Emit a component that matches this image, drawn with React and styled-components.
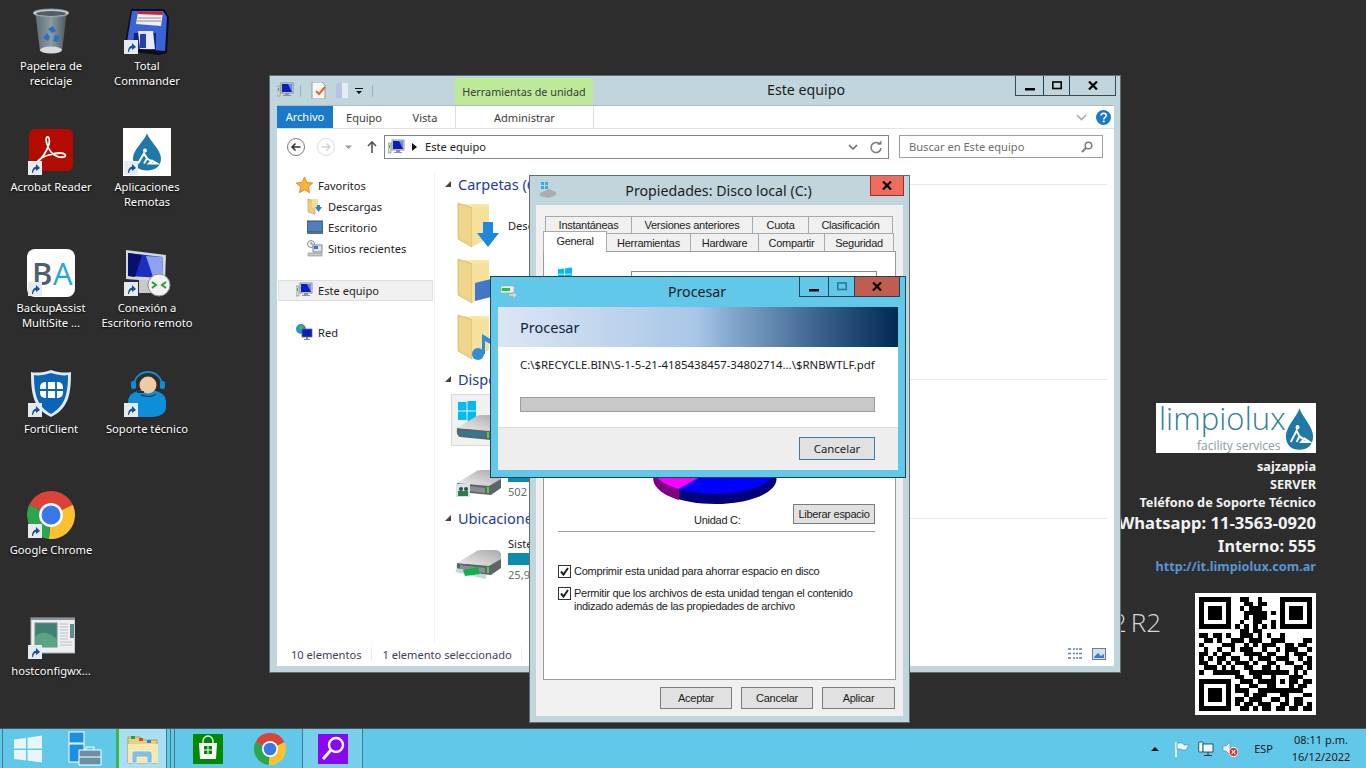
import React from "react";
import styled, { createGlobalStyle } from "styled-components";

const UI = `"Noto Sans", "Open Sans", sans-serif`;
const CLASSIC = `"Liberation Sans", Arial, sans-serif`;

const Global = createGlobalStyle`
  html, body { margin: 0; padding: 0; background: #2d2d2d; overflow: hidden; }
  * { box-sizing: border-box; }
`;

const Screen = styled.div`
  width: 1366px; height: 768px; display: flex; flex-direction: column; overflow: hidden;
  background: #2d2d2d; font-family: ${UI}; font-size: 11.1px; color: #1a1a1a;
`;
const Desktop = styled.div`
  position: relative; flex: 1; display: flex; justify-content: space-between; min-height: 0;
`;
const IconGrid = styled.div`
  display: grid; grid-template-columns: repeat(2, 96px); grid-auto-rows: 121px; padding: 7px 0 0 3px;
`;
const Cell = styled.div`
  display: flex; flex-direction: column; align-items: center;
`;
const IconBox = styled.div`
  position: relative; width: 48px; height: 48px;
  svg { display: block; }
`;
const Badge = styled.span`
  position: absolute; left: 1px; bottom: 1px; width: 14px; height: 14px; background: #e6ebef; display: block;
`;
const IconLabel = styled.div`
  margin-top: 3px; width: 96px; text-align: center; color: #fff; font-size: 11.2px; line-height: 15px;
  text-shadow: 0 1px 2px #000; white-space: pre-line;
`;
const Gl = styled.svg`
  display: block; flex: none; margin: ${p => p.$mt || 0}px 0 0 ${p => p.$ml || 0}px;
`;
const Spaced = styled.span`
  display: block; margin-left: ${p => p.$ml}px;
`;

/* wallpaper */
const Wallpaper = styled.div`
  position: relative; padding: 403px 50px 0 0; width: 300px; display: flex; flex-direction: column; align-items: flex-end;
`;
const Logo = styled.div`
  width: 160px; height: 50px; background: #fff; position: relative; padding-left: 3px; margin-bottom: 4px;
`;
const LogoName = styled.div`
  color: #2f7f9c; font: 300 31px/30px "Open Sans", sans-serif; letter-spacing: .1px; height: 30px;
`;
const LogoSub = styled.div`
  color: #8b9aa3; font: 400 12px/14px "Open Sans", sans-serif; padding-left: 38px; margin-top: 6px;
`;
const LogoDrop = styled.div`
  position: absolute; right: 0; top: 4px;
`;
const Info = styled.div`
  color: ${p => p.$color || "#f2f2f2"}; font: 700 ${p => p.$size || 12.7}px/${p => p.$lh || 18}px "Noto Sans", sans-serif;
  text-align: right; white-space: nowrap;
`;
const Watermark = styled.div`
  position: absolute; right: 205px; top: 606px; color: #d8d8d8; font: 300 26px/32px "Open Sans", sans-serif; white-space: nowrap;
  word-spacing: -3px;
`;
const QrBox = styled.div`
  margin-top: 18px; width: 121px; height: 122px; background: #fff; padding: 4px;
  svg { display: block; }
`;

/* generic window frames */
const Win = styled.div`
  position: absolute; left: ${p => p.$x}px; top: ${p => p.$y}px; width: ${p => p.$w}px; height: ${p => p.$h}px;
  z-index: ${p => p.$z}; display: flex; flex-direction: column; background: ${p => p.$bg}; border: 1px solid ${p => p.$line};
`;
const TitleBar = styled.div`
  height: ${p => p.$h}px; flex: none; display: flex; align-items: flex-start; position: relative;
`;
const TitleText = styled.div`
  flex: 1; text-align: center; font-size: 14.2px; line-height: 20px; padding-top: ${p => p.$pt || 5}px; color: #1c1c1c; padding-left: ${p => p.$pl || 0}px;
`;
const Controls = styled.div`
  display: flex; height: ${p => p.$h || 20}px; margin-right: ${p => p.$mr}px; flex: none;
  border: 1px solid ${p => p.$line}; border-top: none;
`;
const Ctl = styled.div`
  width: ${p => p.$w}px; display: flex; align-items: center; justify-content: center; background: ${p => p.$bg || "transparent"};
  & + & { border-left: 1px solid ${p => p.$line}; }
`;
const CloseSolo = styled.div`
  width: 34px; height: 20px; margin-right: 5px; background: #ee6c60; border: 1px solid #9c2c24; border-top: none;
  display: flex; align-items: center; justify-content: center; flex: none;
`;

/* explorer */
const Quick = styled.div`
  width: 185px; flex: none; display: flex; align-items: center; gap: 6px; padding: 4px 0 0 7px; height: 25px;
`;
const QSep = styled.span`
  width: 1px; height: 12px; background: #9fb0b8; margin: 0 ${p => p.$r || 0}px 0 ${p => p.$l || 0}px; flex: none;
`;
const ContextHead = styled.div`
  width: 138px; height: 27px; margin-top: 2px; background: #bdea9a; color: #3a3a3a; text-align: center; line-height: 27px;
  font-size: 10.8px; flex: none;
`;
const Frame = styled.div`
  flex: 1; min-height: 0; margin: 0 6px 6px 7px; background: #fff; display: flex; flex-direction: column;
  border-top: 1px solid #a9bac2;
`;
const Ribbon = styled.div`
  height: 23px; flex: none; display: flex; border-bottom: 1px solid #dfe3e6;
`;
const RibTab = styled.div`
  width: ${p => p.$w}px; flex: none; text-align: center; line-height: 22px; font-size: 11px; padding-top: ${p => p.$on ? 0 : 1}px;
  background: ${p => p.$on ? "#1a79c9" : "transparent"}; color: ${p => p.$on ? "#fff" : "#3b3b3b"};
  border-left: ${p => p.$ctx ? "1px solid #dcdcdc" : "none"}; border-right: ${p => p.$ctx ? "1px solid #dcdcdc" : "none"};
`;
const RibEnd = styled.div`
  margin-left: auto; display: flex; align-items: center; gap: 9px; padding-right: 3px;
`;
const AddrRow = styled.div`
  height: 44px; flex: none; display: flex; align-items: flex-start; padding-top: 6px;
`;
const NavBtns = styled.div`
  width: 107px; padding-left: 10px; height: 24px; flex: none; display: flex; align-items: center;
`;
const AddrBox = styled.div`
  width: 505px; height: 24px; border: 1px solid #7e8487; display: flex; align-items: center; padding: 0 5px 0 3px; flex: none;
`;
const AddrText = styled.span`
  flex: 1; margin: -2px 0 0 7px; font-size: 11.1px; color: #222;
`;
const SearchBox = styled.div`
  width: 204px; height: 23px; margin-left: 10px; border: 1px solid #9a9fa2; display: flex; align-items: center; justify-content: space-between;
  padding: 0 9px; color: #6d6d6d; font-size: 11.1px; flex: none;
`;
const Body = styled.div`
  flex: 1; min-height: 0; display: flex;
`;
const Nav = styled.div`
  width: 158px; flex: none; padding: 2px 0 0 1px; border-right: 1px solid #f0f0f0;
`;
const NavRow = styled.div`
  height: 21px; display: flex; align-items: center; gap: 5px; padding-left: ${p => p.$indent}px; margin-top: ${p => p.$mt || 0}px;
  margin-right: 1px; font-size: 11.1px; color: #222;
  background: ${p => p.$on ? "#f0f0f0" : "transparent"}; border: ${p => p.$on ? "1px solid #dedede" : "1px solid transparent"};
  svg { display: block; flex: none; }
`;
const Content = styled.div`
  flex: 1; min-width: 0; padding: 0 7px 0 0; overflow: hidden;
`;
const SectionHead = styled.div`
  height: 22px; display: flex; align-items: center; padding-left: 10px; margin-top: ${p => p.$mt || 0}px;
  color: #1e3a9c; font-size: 14.5px;
  &::after { content: ""; flex: 1; height: 1px; background: #e2e8f5; margin-left: 8px; }
`;
const Tri = styled.span`
  width: 0; height: 0; border-left: 6px solid transparent; border-bottom: 6px solid #444; margin-right: 7px;
`;
const Tile = styled.div`
  height: ${p => p.$h}px; margin-top: ${p => p.$mt || 0}px; display: flex; align-items: flex-start; padding-left: 20px; position: relative;
  svg { display: block; flex: none; }
`;
const Selected = styled.div`
  position: absolute; left: 16px; top: 1px; width: 60px; height: 52px; background: #f1f1f1; border: 1px solid #d8d8d8;
`;
const IconSlot = styled.div`
  width: ${p => 53 - (p.$ml || 0)}px; flex: none; position: relative; margin: ${p => p.$mt || 0}px 0 0 ${p => p.$ml || 0}px;
`;
const TileText = styled.div`
  padding-top: 4px; font-size: 11.1px; color: #222; line-height: 15px; margin-top: ${p => p.$mt || 0}px;
`;
const Bar = styled.div`
  width: 60px; height: 12px; background: #0f8cad; margin: 2px 0;
`;
const Gray = styled.div`
  color: #6d6d6d; font-size: 11.1px; line-height: 15px;
`;
const Status = styled.div`
  height: 24px; flex: none; display: flex; align-items: center; padding-left: 14px; color: #3d3d5c; font-size: 11.1px;
`;
const StatusSep = styled.span`
  width: 1px; height: 14px; background: #ececec; margin: 0 ${p => p.$m}px;
`;
const StatusEnd = styled.div`
  margin-left: auto; display: flex; gap: 9px; padding-right: 8px; align-items: center;
`;

/* properties dialog */
const DlgInner = styled.div`
  flex: 1; min-height: 0; margin: 0 6px 6px 6px; background: #f0f0f0; padding-top: 11px; display: flex; flex-direction: column;
  font-family: ${CLASSIC}; font-size: 11px; letter-spacing: -.27px; color: #1c1c1c;
`;
const TabRow = styled.div`
  display: flex; padding-left: ${p => p.$pl}px; height: ${p => p.$h}px; position: relative; z-index: ${p => p.$z || 0};
`;
const Tab = styled.div`
  width: ${p => p.$w}px; flex: none; text-align: center; border: 1px solid #a9a9a9; border-bottom: none; margin-left: -1px;
  line-height: ${p => p.$lh || 17}px; background: ${p => p.$on ? "#fff" : "#f0f0f0"};
  ${p => p.$on ? "margin-top: -2px; height: 21px; position: relative; z-index: 2;" : ""}
`;
const Panel = styled.div`
  margin-left: 7px; width: 353px; height: 429px; background: #fff; border: 1px solid #9c9c9c; padding: 15px 20px 0 14px; flex: none;
`;
const PanelHead = styled.div`
  display: flex; align-items: flex-start;
  svg { flex: none; }
`;
const NameBox = styled.div`
  width: 246px; height: 20px; border: 1px solid #8b8b8b; margin: 4px 0 0 59px; flex: none;
`;
const PieWrap = styled.div`
  margin: 153px 0 0 95px;
`;
const PieFoot = styled.div`
  display: flex; height: 20px;
`;
const DriveLabel = styled.div`
  margin: 10px 0 0 136px; line-height: 13px;
`;
const ClassicBtn = styled.div`
  width: ${p => p.$w}px; height: ${p => p.$h || 22}px; background: #e1e1e1; border: 1px solid #7b7b7b; text-align: center;
  line-height: ${p => (p.$h || 22) - 2}px; margin-left: ${p => p.$auto ? "auto" : "0"}; flex: none;
`;
const Hr = styled.div`
  height: 1px; background: #a0a0a0; margin-top: 7px; width: 317px;
`;
const Check = styled.div`
  display: flex; align-items: flex-start; gap: 3px; margin-top: ${p => p.$mt}px; line-height: 13px;
  svg { flex: none; }
`;
const DlgFoot = styled.div`
  display: flex; gap: 9px; justify-content: flex-end; padding: 7px 8px 0 0;
`;

/* progress */
const ProcInner = styled.div`
  flex: 1; min-height: 0; margin: 0 7px 7px 7px; background: #fff; display: flex; flex-direction: column;
`;
const ProcHead = styled.div`
  height: 40px; flex: none; padding-left: 22px; line-height: 40px; font-size: 14.5px; color: #10233f;
  background: linear-gradient(90deg, #dde6f4 0%, #a7c6e6 50%, #8cb0d4 56%, #3a648e 80%, #002a54 100%);
`;
const ProcBody = styled.div`
  height: 80px; flex: none; padding: 10px 23px 0 22px;
`;
const PathText = styled.div`
  font-size: 11.4px; line-height: 15px; color: #1a1a1a; white-space: nowrap;
`;
const Progress = styled.div`
  margin-top: 25px; height: 15px; background: #c8c8c8; border: 1px solid #9d9d9d;
`;
const ProcFoot = styled.div`
  flex: 1; background: #eeeeee; border-top: 1px solid #dcdcdc; padding: 9px 23px 0 0; display: flex; justify-content: flex-end;
`;
const FocusBtn = styled.div`
  width: 76px; height: 23px; background: #e1e1e1; border: 1px solid #3f7aa5; text-align: center; line-height: 21px; font-size: 11.4px; color: #1c1c1c;
`;

/* taskbar */
const Taskbar = styled.div`
  height: 40px; flex: none; display: flex; align-items: center; background: #62c8ea; border-top: 1px solid #49555b;
  color: #1b1b1b;
`;
const TaskEdge = styled.span`
  width: 3px; height: 39px; background: #62c8ea; border-right: 1px solid #3f7c90; flex: none;
`;
const TaskSlot = styled.div`
  width: ${p => p.$w}px; height: 39px; flex: none; display: flex; align-items: center;
  justify-content: ${p => p.$start ? "flex-start" : "center"};
  background: ${p => p.$bg || "transparent"};
  border-left: ${p => p.$accent ? "3px solid #3cb54a" : p.$div ? "1px solid #3f7c90" : "none"};
  svg { display: block; }
`;
const TaskDiv = styled.span`
  width: 1px; height: 39px; background: #3f7c90; margin-right: ${p => p.$mr || 0}px; flex: none;
`;
const Tray = styled.div`
  margin-left: auto; display: flex; align-items: center; height: 39px;
  svg { display: block; }
`;
const TrayItem = styled.span`
  margin-left: ${p => p.$ml}px; display: block; font-size: 11px;
`;
const Clock = styled.div`
  width: 66px; margin: -2px 12px 0 15px; text-align: center; font-size: 11px; line-height: 17px; color: #1b1b1b; white-space: nowrap;
`;

/* ---------- drawings ---------- */
const Arrow = () => (
  <svg width="14" height="14" viewBox="0 0 14 14"><path d="M4 12c0-4 1.500-6 4-6.500V3l4 4-4 3V8C6.500 8 5.500 9.500 5 12z" fill="#134f9c" /></svg>
);
const Short = ({ children }) => (<IconBox>{children}<Badge><Arrow /></Badge></IconBox>);

const Recycle = () => (
  <svg width="48" height="48" viewBox="0 0 48 48">
    <defs><linearGradient id="bin" x1="0" x2="1"><stop offset="0" stopColor="#5c6a72" /><stop offset=".5" stopColor="#8d9ba4" /><stop offset="1" stopColor="#4b565c" /></linearGradient></defs>
    <path d="M8 6 L40 6 L35 50 C30 53 18 53 13 50Z" fill="url(#bin)" transform="translate(0,-2) scale(1,.92)" />
    <ellipse cx="24" cy="6" rx="18" ry="4" fill="#c9d1d6" stroke="#868f95" />
    <ellipse cx="24" cy="6.500" rx="15" ry="2.500" fill="#535d63" />
    <ellipse cx="24" cy="43" rx="11" ry="3.500" fill="#d8dcdf" />
    <path d="M21 22l5-3 3 5-4 2zM16 31l4-5 3 4-2 4zM28 28l5 1-2 6-5-1z" fill="#2f6fc0" />
  </svg>
);
const Floppy = () => (
  <svg width="48" height="48" viewBox="0 0 48 48">
    <path d="M8 2H41L46 10 44 46 36 48 4 44 2 36Z" fill="#0b0b22" />
    <path d="M9 4H40L44 10 42 44 6 41 4 35Z" fill="#3b62d8" />
    <path d="M15 5H40L38 19 13 17Z" fill="#eef0f4" />
    <path d="M15 5H40L39.500 8 14.600 7Z" fill="#d21f2a" />
    <path d="M15 11H38M14 14H38" stroke="#8e9094" />
    <path d="M11 26H33L33 43 10 41Z" fill="#12257a" />
    <path d="M15 24H30L32 42H17Z" fill="#e8e8f8" />
    <path d="M17 27h6v14h-6z" fill="#2340b0" />
  </svg>
);
const Acrobat = () => (
  <svg width="48" height="48" viewBox="0 0 48 48">
    <rect x="2" y="1" width="44" height="42" rx="6" fill="#b30b00" />
    <path d="M10 34c5-3 10-11 12-18 1-4 0-8-2-7-2 2 0 10 4 15 3 4 9 6 13 5 3-1 1-4-4-4-6 0-17 3-21 7-3 3-3 4-2 2z" fill="none" stroke="#fff" strokeWidth="1.800" />
  </svg>
);
const Drop = ({ w = 34, h = 39 }) => (
  <svg width={w} height={h} viewBox="0 0 34 39" preserveAspectRatio="none">
    <path d="M17 1C14 9 3 17 3 26c0 8 6 12 14 12s14-4 14-12C31 17 20 9 17 1z" fill="#1f78a6" />
    <circle cx="15" cy="18" r="2" fill="#fff" />
    <path d="M8 31l6-10 3 5 5 3M17 26l-3 5M22 28l5 3H19z" fill="none" stroke="#fff" strokeWidth="2" />
  </svg>
);
const Remote = () => (
  <svg width="48" height="48" viewBox="0 0 48 48">
    <rect width="48" height="48" fill="#fff" />
    <g transform="translate(7,3)"><svg width="34" height="42" viewBox="0 0 34 39"><path d="M17 1C14 9 3 17 3 26c0 8 6 12 14 12s14-4 14-12C31 17 20 9 17 1z" fill="#1f78a6" /><circle cx="15" cy="18" r="2" fill="#fff" /><path d="M8 31l6-10 3 5 5 3M17 26l-3 5M22 28l5 3H19z" fill="none" stroke="#fff" strokeWidth="2" /></svg></g>
  </svg>
);
const Backup = () => (
  <svg width="48" height="48" viewBox="0 0 48 48">
    <rect width="48" height="48" rx="8" fill="#fff" />
    <text x="5" y="36" fontFamily="Open Sans, sans-serif" fontSize="31" fontWeight="600" fill="#4f5f6b">B</text>
    <text x="26" y="36" fontFamily="Open Sans, sans-serif" fontSize="31" fill="#25a6e3">A</text>
  </svg>
);
const Rdp = () => (
  <svg width="48" height="48" viewBox="0 0 48 48">
    <path d="M3 1L43 6 42 33 3 30z" fill="#d5d8da" />
    <path d="M5 4L40 8 39 29 5 27z" fill="#1c2ec0" />
    <path d="M5 4L19 6 12 28 5 27z" fill="#07106a" />
    <path d="M23 7L40 8 39 29 30 28z" fill="#8ea3ef" />
    <path d="M16 31H30V44H16z" fill="#c9c9c9" />
    <circle cx="36" cy="36" r="11" fill="#f2f2f2" stroke="#8d8d8d" />
    <path d="M29 33l4 3-4 3M43 33l-4 3 4 3" fill="none" stroke="#2f9b2f" strokeWidth="2" />
  </svg>
);
const Forti = () => (
  <svg width="48" height="48" viewBox="0 0 48 48">
    <path d="M24 0C16 3 8 3 4 2 4 24 6 38 24 47 42 38 44 24 44 2 40 3 32 3 24 0z" fill="#dfeaf4" />
    <path d="M24 3C17 5 11 6 7 5 7 24 10 36 24 44 38 36 41 24 41 5 37 6 31 5 24 3z" fill="#0b64b4" />
    <rect x="13" y="12" width="23" height="16" rx="5" fill="#fff" />
    <path d="M13 20H36M20 12V28M29 12V28" stroke="#0b64b4" strokeWidth="1.800" />
  </svg>
);
const Support = () => (
  <svg width="48" height="48" viewBox="0 0 48 48">
    <path d="M5 47V32c0-9 9-12 19-12s19 3 19 12v6c0 6-8 9-14 9z" fill="#0d8fd8" />
    <circle cx="25" cy="15" r="8.500" fill="#f1c9a2" />
    <path d="M11 15a14 13 0 0 1 28 0" fill="none" stroke="#0d8fd8" strokeWidth="1.800" />
    <rect x="8" y="11" width="5" height="8" rx="2" fill="#0d8fd8" />
    <rect x="37" y="11" width="5" height="8" rx="2" fill="#0d8fd8" />
    <path d="M14 22H21" stroke="#1a1a1a" strokeWidth="1.500" />
    <path d="M18 25C24 27 30 27 33 24" stroke="#1a1a1a" fill="none" />
  </svg>
);
const Chrome = ({ size = 48 }) => (
  <svg width={size} height={size} viewBox="0 0 48 48">
    <path d="M24 24L2.250 13.860A24 24 0 0 1 45.750 13.860Z" fill="#dd4238" />
    <path d="M24 24L45.750 13.860A24 24 0 0 1 21.900 47.900Z" fill="#fbc12e" />
    <path d="M24 24L21.900 47.900A24 24 0 0 1 2.250 13.860Z" fill="#2da44e" />
    <circle cx="24" cy="24" r="12" fill="#fff" />
    <circle cx="24" cy="24" r="9.500" fill="#3b78e7" />
  </svg>
);
const Hostcfg = () => (
  <svg width="48" height="48" viewBox="0 0 48 48">
    <rect x="4" y="6" width="44" height="35" fill="#eceef0" stroke="#a8adb2" />
    <rect x="4" y="6" width="44" height="2" fill="#8e9499" />
    <rect x="8" y="11" width="22" height="24" fill="#3d8275" stroke="#7d8790" />
    <path d="M8 25C14 18 22 20 30 27V35H8z" fill="#5aa383" />
    <path d="M33 12h8M33 15h8M33 18h8M33 21h8M33 24h8M33 27h8M33 30h12M33 33h12" stroke="#bcc1c6" />
    <rect x="43" y="12" width="4" height="14" fill="#5d8f8a" />
  </svg>
);

const Computer = () => (
  <svg width="17" height="17" viewBox="0 0 17 17">
    <rect x="0" y="4" width="3" height="10" fill="#d8dcd8" stroke="#7c8a7a" strokeWidth=".6" />
    <rect x="1" y="6" width="1" height="3" fill="#46b04a" />
    <rect x="4" y="1" width="12" height="10" fill="#e4e8ee" stroke="#5f6a78" strokeWidth=".7" />
    <rect x="5" y="2" width="10" height="8" fill="#0a1fb4" />
    <path d="M11 2h4v8z" fill="#6a8af0" />
    <path d="M8 11h4v2h2v1H6v-1h2z" fill="#8a94a0" />
  </svg>
);
const Star = () => (
  <svg width="17" height="17" viewBox="0 0 17 17"><path d="M8.500 0l2.400 5.400 5.800.6-4.300 3.900 1.200 5.800-5.100-3-5.100 3 1.200-5.800L.3 6l5.800-.6z" fill="#f7b733" stroke="#e26f2a" strokeWidth=".8" /></svg>
);
const SmallDl = () => (
  <svg width="16" height="17" viewBox="0 0 16 17">
    <path d="M1 1l7 2v13l-7-2z" fill="#e8cf7d" stroke="#b59b4d" strokeWidth=".6" /><path d="M5 1h6v9H5z" fill="#f3dc93" />
    <path d="M8 9h2V7h3v2h2l-3.500 5z" fill="#1f84d6" />
  </svg>
);
const SmallDesk = () => (
  <svg width="16" height="17" viewBox="0 0 16 17"><rect y="2" width="16" height="11" fill="#4e7fb5" stroke="#3c4f74" /><rect x="0" y="13" width="16" height="2" fill="#54708f" /></svg>
);
const SmallRecent = () => (
  <svg width="16" height="17" viewBox="0 0 16 17">
    <circle cx="4" cy="4" r="3.500" fill="#f4f4f4" stroke="#8a8f94" /><path d="M4 2v2h2" stroke="#555" fill="none" strokeWidth=".7" />
    <rect x="6" y="5" width="9" height="7" fill="#dfe4ea" stroke="#7a8794" /><rect x="7" y="6" width="4" height="3" fill="#3c76c4" />
    <rect x="1" y="13" width="14" height="3" fill="#c2c8ce" stroke="#838a91" strokeWidth=".6" />
  </svg>
);
const Net = () => (
  <svg width="17" height="17" viewBox="0 0 17 17">
    <circle cx="5" cy="5" r="5" fill="#2e8bd8" /><path d="M2 3l3-2 2 2-2 3-2-1zM6 8l2-1 1 2-2 1z" fill="#45b649" />
    <rect x="6" y="5" width="10" height="8" fill="#0a1fb4" stroke="#5f6a78" strokeWidth=".7" />
    <path d="M10 13h2v2h2v1H8v-1h2z" fill="#7d8894" />
  </svg>
);
const Folder = ({ kind }) => (
  <svg width="44" height="48" viewBox="0 0 44 48">
    <path d="M6 3h26v34H10z" fill="#f8e6a6" />
    <path d="M1 2l14 5v39L1 38z" fill="#efd58a" stroke="#c7a94f" strokeWidth=".6" />
    <path d="M15 7l17-1v31l-17 9z" fill="#f5e09c" />
    {kind === "down" && <path d="M26 21h10v11h6L31 46 20 32h6z" fill="#1e88dc" />}
    {kind === "pic" && <path d="M18 26L42 20V38L18 44z" fill="#3f78c8" />}
    {kind === "music" && <g fill="#2f8ed2"><circle cx="21" cy="41" r="6" /><path d="M25 41V21l10 6v5l-7-4v13z" /></g>}
  </svg>
);
const Drive = ({ badge, link, win, id }) => (
  <svg width="46" height="50" viewBox="0 0 46 50">
    <defs><linearGradient id={id} x1="0" x2="1" y1="1" y2="0"><stop offset="0" stopColor="#eeeeee" /><stop offset="1" stopColor="#a9a9a9" /></linearGradient></defs>
    {win && <g fill="#00bcf2"><rect x="3" y="5" width="8.500" height="8.500" /><rect x="12.500" y="4" width="8.500" height="9.500" /><rect x="3" y="14.500" width="8.500" height="8.500" /><rect x="12.500" y="14.500" width="8.500" height="9.500" /></g>}
    <path d="M2 31Q1 39 5 40L36 43 46 36V26L34 33Z" fill="#5f6466" />
    <path d="M2 31L20 20Q22 18 26 18H40Q45 18 46 22V27L34 34Z" fill={`url(#${id})`} />
    <path d="M5 33L30 36V41L5 38Z" fill={win ? "#2d7a95" : "#8a8e90"} />
    <rect x="32" y="35" width="2" height="6" fill="#46d24a" />
    {badge && <g><rect x="1" y="32" width="14" height="13" fill="#cfe6e6" /><circle cx="6" cy="37" r="2" fill="#444" /><circle cx="11" cy="37" r="2" fill="#444" /><rect x="3" y="39" width="10" height="5" fill="#2a7d4d" /></g>}
    {link && <g><path d="M1 38l30 7" stroke="#bfd8dc" strokeWidth="4" /><path d="M8 38l15-3 2 7-15 2z" fill="#10b04a" /></g>}
  </svg>
);
const Win8 = ({ fill, w = 28, h = 28 }) => (
  <svg width={w} height={h} viewBox="0 0 28 28" fill={fill}>
    <path d="M0 4.500L12 3V13.500H0zM13.500 2.800L28 .5V13.500H13.500zM0 15H12V25.500L0 24zM13.500 15H28V27.500L13.500 25.500z" />
  </svg>
);
const Glyph = ({ kind, color = "#000" }) => {
  if (kind === "min") return <svg width="10" height="10" viewBox="0 0 10 10"><rect y="7" width="10" height="2.500" fill={color} /></svg>;
  if (kind === "max") return <svg width="10" height="10" viewBox="0 0 10 10"><rect x=".8" y="1" width="8.400" height="6.500" fill="none" stroke={color} strokeWidth="1.600" /></svg>;
  return <svg width="10" height="9" viewBox="0 0 10 9"><path d="M1 .5L9 8.500M9 .5L1 8.500" stroke={color} strokeWidth="2.200" /></svg>;
};
const CheckBox = () => (
  <svg width="13" height="13" viewBox="0 0 13 13">
    <rect x=".5" y=".5" width="12" height="12" fill="#fff" stroke="#333" />
    <path d="M3 6.500l2.500 3L10 3" fill="none" stroke="#222" strokeWidth="2" />
  </svg>
);
const Pie = () => (
  <Gl width="124" height="60" viewBox="0 0 124 60">
    <path d="M.5 25V35C.5 49 28 60 62 60s61.500-11 61.500-25V25z" fill="#00007f" />
    <path d="M.5 25V35C.5 44 12 52 26 56V35z" fill="#7f007f" />
    <ellipse cx="62" cy="25" rx="61.500" ry="25" fill="#0000ff" />
    <path d="M62 25L26 45C10 41 .5 33 .5 25S20 0 62 0z" fill="#ff00ff" />
    <path d="M26 45L62 25" stroke="#00007f" strokeWidth=".5" />
  </Gl>
);

const qrRows = [
  "1111111001100100001111111",
  "1000001000110110001000001",
  "1011101001011100001011101",
  "1011101000111110101011101",
  "1011101000101110001011101",
  "1000001001001100101000001",
  "1111111010101010101111111",
  "0000000001101100000000000",
  "1101101001110101001000000",
  "0110100111011100111000011",
  "1000011100101011100110110",
  "0100100101110010010111001",
  "1101011000111101100101110",
  "1010110110010111011100101",
  "1100101011101001100110011",
  "0111010100110011010001101",
  "1001111110011111111101010",
  "0000000011001100100011100",
  "1111111001110111101011011",
  "1000001010011001100010110",
  "1011101011100111111111100",
  "1011101000101110001100011",
  "1011101011011100110101100",
  "1000001010110111001101101",
  "1111111001101011011011011",
];
const Qr = () => (
  <svg width="113" height="114" viewBox="0 0 25 25" preserveAspectRatio="none" shapeRendering="crispEdges">
    {qrRows.map((r, y) => r.split("").map((c, x) => c === "1" ? <rect key={x + "-" + y} x={x} y={y} width="1" height="1" fill="#000" /> : null))}
  </svg>
);

const icons = [
  [<IconBox key="r"><Recycle /></IconBox>, "Papelera de\nreciclaje"],
  [<Short key="f"><Floppy /></Short>, "Total\nCommander"],
  [<Short key="a"><Acrobat /></Short>, "Acrobat Reader"],
  [<Short key="b"><Remote /></Short>, "Aplicaciones\nRemotas"],
  [<Short key="c"><Backup /></Short>, "BackupAssist\nMultiSite ..."],
  [<Short key="d"><Rdp /></Short>, "Conexión a\nEscritorio remoto"],
  [<Short key="e"><Forti /></Short>, "FortiClient"],
  [<Short key="g"><Support /></Short>, "Soporte técnico"],
  [<Short key="h"><Chrome /></Short>, "Google Chrome"],
  null,
  [<Short key="i"><Hostcfg /></Short>, "hostconfigwx..."],
];

const Explorer = () => (
  <Win $x={269} $y={75} $w={852} $h={598} $z={1} $bg="#c1d5dc" $line="#5c6e76">
    <TitleBar $h={29}>
      <Quick>
        <Computer />
        <QSep />
        <Gl $ml={4} width="16" height="17" viewBox="0 0 16 17"><path d="M1 0h10l3 3v14H1z" fill="#f6f6f6" stroke="#9a9a9a" /><path d="M5 9l3 3 6-7" fill="none" stroke="#e6632a" strokeWidth="2" /></Gl>
        <Gl $ml={2} width="14" height="17" viewBox="0 0 14 17"><path d="M1 1h6v15H1z" fill="#b4c4e2" /><path d="M7 1h6v15H7z" fill="#e6ecf6" /></Gl>
        <Gl width="8" height="8" viewBox="0 0 8 8"><path d="M0 1h8v1H0zM1 4h6L4 7z" fill="#111" /></Gl>
        <QSep $l={3} />
      </Quick>
      <ContextHead>Herramientas de unidad</ContextHead>
      <TitleText $pt={4} $pl={4}>Este equipo</TitleText>
      <Controls $mr={4} $line="#3b4a50">
        <Ctl $w={27} $line="#3b4a50"><Glyph kind="min" /></Ctl>
        <Ctl $w={26} $line="#3b4a50"><Glyph kind="max" /></Ctl>
        <Ctl $w={46} $line="#3b4a50"><Glyph kind="x" /></Ctl>
      </Controls>
    </TitleBar>
    <Frame>
      <Ribbon>
        <RibTab $w={56} $on>Archivo</RibTab>
        <RibTab $w={62}>Equipo</RibTab>
        <RibTab $w={60}>Vista</RibTab>
        <RibTab $w={139} $ctx>Administrar</RibTab>
        <RibEnd>
          <Gl width="11" height="7" viewBox="0 0 11 7"><path d="M1 1l4.500 4.500L10 1" fill="none" stroke="#a9a9a9" strokeWidth="1.600" /></Gl>
          <Gl width="15" height="15" viewBox="0 0 15 15"><circle cx="7.500" cy="7.500" r="7.500" fill="#1a79c9" /><path d="M5 5.500c.2-3 5.200-3 5.200 0 0 2-2.500 2-2.500 4" fill="none" stroke="#fff" strokeWidth="1.600" /><rect x="6.800" y="10.500" width="1.800" height="1.800" fill="#fff" /></Gl>
        </RibEnd>
      </Ribbon>
      <AddrRow>
        <NavBtns>
          <Gl width="96" height="20" viewBox="0 0 96 20">
            <circle cx="9" cy="10" r="8.500" fill="#fff" stroke="#7d7d7d" /><path d="M13.500 10H5M8.500 6.500L5 10l3.500 3.500" fill="none" stroke="#333" strokeWidth="1.500" />
            <circle cx="39" cy="10" r="8.500" fill="#fff" stroke="#dcdcdc" /><path d="M34.500 10H43M39.500 6.500L43 10l-3.500 3.500" fill="none" stroke="#d4d4d4" strokeWidth="1.500" />
            <path d="M58 8.500h7l-3.500 3.500z" fill="#9a9a9a" />
            <path d="M85 16V5M81 9l4-4 4 4" fill="none" stroke="#555" strokeWidth="1.600" />
          </Gl>
        </NavBtns>
        <AddrBox>
          <Computer />
          <Gl $ml={7} width="6" height="8" viewBox="0 0 6 8"><path d="M0 0l5 4-5 4z" fill="#111" /></Gl>
          <AddrText>Este equipo</AddrText>
          <Gl width="10" height="7" viewBox="0 0 10 7"><path d="M1 1l4 4 4-4" fill="none" stroke="#666" strokeWidth="1.500" /></Gl>
          <Gl $ml={11} width="14" height="14" viewBox="0 0 14 14"><path d="M11 4.500a5 5 0 1 0 1 3.500" fill="none" stroke="#7d7d7d" strokeWidth="1.600" /><path d="M8 4.500h4.500V.5z" fill="#7d7d7d" /></Gl>
        </AddrBox>
        <SearchBox>
          Buscar en Este equipo
          <Gl width="12" height="12" viewBox="0 0 12 12"><circle cx="7.500" cy="4.500" r="3.300" fill="none" stroke="#7d7d7d" strokeWidth="1.500" /><path d="M5 7L1 11" stroke="#7d7d7d" strokeWidth="2" /></Gl>
        </SearchBox>
      </AddrRow>
      <Body>
        <Nav>
          <NavRow $indent={17}><Star />Favoritos</NavRow>
          <NavRow $indent={28}><SmallDl />Descargas</NavRow>
          <NavRow $indent={28}><SmallDesk />Escritorio</NavRow>
          <NavRow $indent={28}><SmallRecent />Sitios recientes</NavRow>
          <NavRow $indent={17} $mt={21} $on><Computer />Este equipo</NavRow>
          <NavRow $indent={17} $mt={21}><Net />Red</NavRow>
        </Nav>
        <Content>
          <SectionHead><Tri />Carpetas (6)</SectionHead>
          <Tile $h={56} $mt={4}><IconSlot $mt={2} $ml={2}><Folder kind="down" /></IconSlot><TileText $mt={15}>Descargas</TileText></Tile>
          <Tile $h={56}><IconSlot $mt={2} $ml={2}><Folder kind="pic" /></IconSlot></Tile>
          <Tile $h={56}><IconSlot $mt={2} $ml={2}><Folder kind="music" /></IconSlot></Tile>
          <SectionHead $mt={1}><Tri />Dispositivos y unidades (2)</SectionHead>
          <Tile $h={56} $mt={3}><Selected /><IconSlot $mt={4}><Drive win id="d1" /></IconSlot></Tile>
          <Tile $h={55}><IconSlot $mt={3}><Drive badge id="d2" /></IconSlot><TileText><div>&nbsp;</div><Bar /><Gray>502 GB</Gray></TileText></Tile>
          <SectionHead $mt={3}><Tri />Ubicaciones de red (1)</SectionHead>
          <Tile $h={56} $mt={3}><IconSlot><Drive link id="d3" /></IconSlot><TileText><div>Sistema</div><Bar /><Gray>25,9 GB</Gray></TileText></Tile>
        </Content>
      </Body>
      <Status>
        10 elementos
        <StatusSep $m={10} />
        1 elemento seleccionado
        <StatusSep $m={9} />
        <StatusEnd>
          <Gl width="15" height="12" viewBox="0 0 15 12"><path d="M0 1h3M0 5.500h3M0 10h3M5 1h2M8 1h2M11 1h3M5 5.500h2M8 5.500h2M11 5.500h3M5 10h2M8 10h2M11 10h3" stroke="#5f7fa8" fill="none" strokeWidth="1.500" /></Gl>
          <Gl width="14" height="14" viewBox="0 0 14 14"><rect x=".5" y="1.500" width="13" height="11" fill="#cfe2f5" stroke="#6a7f96" /><path d="M2 10l4-4 3 3 3-2v4H2z" fill="#3b7cc4" /></Gl>
        </StatusEnd>
      </Status>
    </Frame>
  </Win>
);

const Properties = () => (
  <Win $x={529} $y={175} $w={381} $h={548} $z={2} $bg="#c1d5dc" $line="#5c6e76">
    <TitleBar $h={29}>
      <Gl $mt={6} $ml={9} width="18" height="16" viewBox="0 0 18 16">
        <g fill="#3fa8e0"><rect width="3" height="3" x="2" /><rect width="3" height="3" x="6" /><rect width="3" height="3" x="2" y="4" /><rect width="3" height="3" x="6" y="4" /></g>
        <path d="M1 11l9-4 7 3v3l-7 3-9-2z" fill="#a9aeb1" />
      </Gl>
      <TitleText $pl={10}>Propiedades: Disco local (C:)</TitleText>
      <CloseSolo><Glyph kind="x" /></CloseSolo>
    </TitleBar>
    <DlgInner>
      <TabRow $pl={10} $h={17}>
        <Tab $w={87}>Instantáneas</Tab><Tab $w={122}>Versiones anteriores</Tab><Tab $w={57}>Cuota</Tab><Tab $w={85}>Clasificación</Tab>
      </TabRow>
      <TabRow $pl={8} $h={18} $z={2}>
        <Tab $w={64} $on $lh={19}>General</Tab><Tab $w={85} $lh={19}>Herramientas</Tab><Tab $w={69} $lh={19}>Hardware</Tab><Tab $w={67} $lh={19}>Compartir</Tab><Tab $w={70} $lh={19}>Seguridad</Tab>
      </TabRow>
      <Panel>
        <PanelHead>
          <Win8 fill="#00bcf2" w={14} h={14} />
          <NameBox />
        </PanelHead>
        <PieWrap><Pie /></PieWrap>
        <PieFoot>
          <DriveLabel>Unidad C:</DriveLabel>
          <ClassicBtn $w={82} $h={20} $auto>Liberar espacio</ClassicBtn>
        </PieFoot>
        <Hr />
        <Check $mt={33}><CheckBox />Comprimir esta unidad para ahorrar espacio en disco</Check>
        <Check $mt={9}><CheckBox /><span>Permitir que los archivos de esta unidad tengan el contenido<br />indizado además de las propiedades de archivo</span></Check>
      </Panel>
      <DlgFoot>
        <ClassicBtn $w={72}>Aceptar</ClassicBtn>
        <ClassicBtn $w={72}>Cancelar</ClassicBtn>
        <ClassicBtn $w={73}>Aplicar</ClassicBtn>
      </DlgFoot>
    </DlgInner>
  </Win>
);

const Progresser = () => (
  <Win $x={490} $y={276} $w={416} $h={202} $z={3} $bg="#62c8ea" $line="#1d4556">
    <TitleBar $h={30}>
      <Gl $mt={8} $ml={10} width="16" height="14" viewBox="0 0 16 14">
        <rect x="0" y="1" width="13" height="7" fill="#e7efe7" stroke="#9aa8a0" strokeWidth=".6" />
        <rect x="1" y="3" width="8" height="3" fill="#27c23f" />
        <path d="M8 9h4V7l4 3-4 3v-2H8z" fill="#d5dcdf" stroke="#a3adb1" strokeWidth=".5" />
      </Gl>
      <TitleText $pl={78}>Procesar</TitleText>
      <Controls $mr={5} $line="#1d4556">
        <Ctl $w={28} $line="#1d4556"><Glyph kind="min" /></Ctl>
        <Ctl $w={26} $line="#1d4556"><Glyph kind="max" color="#2e7795" /></Ctl>
        <Ctl $w={45} $line="#1d4556" $bg="#c25b50"><Glyph kind="x" /></Ctl>
      </Controls>
    </TitleBar>
    <ProcInner>
      <ProcHead>Procesar</ProcHead>
      <ProcBody>
        <PathText>C:\$RECYCLE.BIN\S-1-5-21-4185438457-34802714...\$RNBWTLF.pdf</PathText>
        <Progress />
      </ProcBody>
      <ProcFoot><FocusBtn>Cancelar</FocusBtn></ProcFoot>
    </ProcInner>
  </Win>
);

export default function App() {
  return (
    <Screen>
      <Global />
      <Desktop>
        <IconGrid>
          {icons.map((it, i) => it ? (
            <Cell key={i}>{it[0]}<IconLabel>{it[1]}</IconLabel></Cell>
          ) : <Cell key={i} />)}
        </IconGrid>
        <Wallpaper>
          <Watermark>Windows Server 2012 R2</Watermark>
          <Logo>
            <LogoName>limpiolux</LogoName>
            <LogoSub>facility services</LogoSub>
            <LogoDrop><Drop w={33} h={44} /></LogoDrop>
          </Logo>
          <Info>sajzappia</Info>
          <Info>SERVER</Info>
          <Info>Teléfono de Soporte Técnico</Info>
          <Info $size={16.6} $lh={24}>Whatsapp: 11-3563-0920</Info>
          <Info $size={16.2} $lh={22}>Interno: 555</Info>
          <Info $color="#5b94d4" $lh={18}>http://it.limpiolux.com.ar</Info>
          <QrBox><Qr /></QrBox>
        </Wallpaper>
        <Explorer />
        <Properties />
        <Progresser />
      </Desktop>
      <Taskbar>
        <TaskEdge />
        <TaskSlot $w={50}><Win8 fill="#e6f6fb" /></TaskSlot>
        <TaskSlot $w={63}>
          <svg width="34" height="36" viewBox="0 0 34 36">
            <rect x="1" y="1" width="15" height="11" fill="#1d8fdc" stroke="#fff" />
            <path d="M1 13h15v18H1z" fill="#1d8fdc" stroke="#fff" />
            <path d="M11 19h22v15H11z" fill="#6b8fa3" stroke="#fff" />
            <path d="M18 19v-3h8v3M11 26h22" fill="none" stroke="#fff" />
          </svg>
        </TaskSlot>
        <TaskSlot $w={50} $bg="#a8e0f3" $accent>
          <svg width="32" height="30" viewBox="0 0 32 30">
            <path d="M1 3h12l2 3h15v23H1z" fill="#e8cf86" stroke="#b79a55" />
            <rect x="4" y="2" width="4" height="3" fill="#1fa33a" /><rect x="12" y="4" width="4" height="3" fill="#d04a2a" /><rect x="20" y="6" width="4" height="3" fill="#2a86d0" />
            <path d="M1 10h30v19H1z" fill="#f8e8ad" />
            <path d="M5 29V20c0-2 1-3 3-3h14c2 0 3 1 3 3v9h-5v-6h-10v6z" fill="#7fc0e2" stroke="#e8f6fb" strokeWidth=".7" />
          </svg>
        </TaskSlot>
        <TaskDiv $mr={3} />
        <TaskDiv $mr={3} />
        <TaskDiv />
        <TaskSlot $w={127} $start>
          <Gl $ml={18} width="30" height="30" viewBox="0 0 30 30">
            <rect width="30" height="30" fill="#008a00" />
            <path d="M6 9h18l-1 16H7z" fill="#fff" />
            <path d="M10 9V7a5 5 0 0 1 10 0v2" fill="none" stroke="#fff" strokeWidth="1.300" />
            <path d="M11 12h3.500v3.500H11zM15.500 12H19v3.500h-3.500zM11 16.500h3.500V20H11zM15.500 16.500H19V20h-3.500z" fill="#008a00" />
          </Gl>
          <Spaced $ml={31}><Chrome size={32} /></Spaced>
        </TaskSlot>
        <TaskSlot $w={60} $bg="#77cfec" $div>
          <svg width="30" height="30" viewBox="0 0 30 30">
            <rect width="30" height="30" fill="#8a07f0" />
            <circle cx="18" cy="11" r="7" fill="none" stroke="#fff" strokeWidth="2.400" />
            <path d="M13 16l-8 9" stroke="#fff" strokeWidth="3" />
          </svg>
        </TaskSlot>
        <TaskDiv />
        <Tray>
          <svg width="8" height="5" viewBox="0 0 8 5"><path d="M0 5l4-4 4 4z" fill="#111" /></svg>
          <TrayItem $ml={15}>
            <svg width="16" height="16" viewBox="0 0 16 16"><path d="M2 1v15" stroke="#fff" strokeWidth="1.500" /><path d="M3 2h6l1 2h5l-3 5H8L7 8H3z" fill="#e9f7fb" stroke="#4d7f92" strokeWidth=".6" /></svg>
          </TrayItem>
          <TrayItem $ml={8}>
            <svg width="16" height="16" viewBox="0 0 16 16"><rect x=".7" y="1" width="4.500" height="10" rx="1" fill="#e9f7fb" stroke="#234" strokeWidth=".8" /><rect x="5" y="3" width="10" height="8" fill="#e9f7fb" stroke="#234" strokeWidth=".8" /><path d="M10 11v3M6 14.500h8" stroke="#234" /></svg>
          </TrayItem>
          <TrayItem $ml={8}>
            <svg width="16" height="16" viewBox="0 0 16 16"><path d="M1 5h3l4-4v13L4 10H1z" fill="#e9f7fb" stroke="#6a8b96" strokeWidth=".7" /><circle cx="11.500" cy="11" r="4.500" fill="#e02626" stroke="#fff" /><path d="M9.700 9.200l3.600 3.600M13.300 9.200l-3.600 3.600" stroke="#fff" strokeWidth="1.200" /></svg>
          </TrayItem>
          <TrayItem $ml={16}>ESP</TrayItem>
          <Clock>08:11 p.m.<br />16/12/2022</Clock>
        </Tray>
      </Taskbar>
    </Screen>
  );
}
